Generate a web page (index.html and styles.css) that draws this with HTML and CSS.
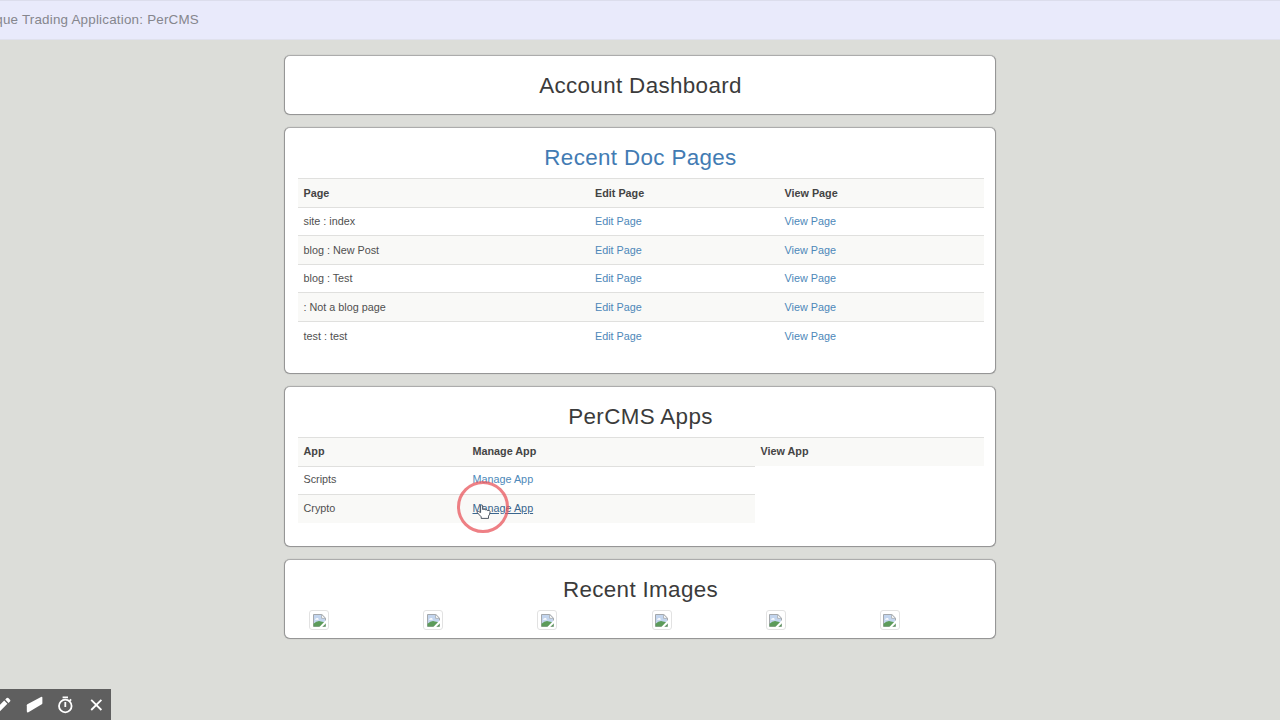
FILE: index.html
```html
<!DOCTYPE html>
<html lang="en">
<head>
    <meta charset="UTF-8">
    <meta name="viewport" content="width=device-width, initial-scale=1.0">
    <title>PerCMS</title>
    <link rel="stylesheet" href="styles.css">
</head>
<body>
    <svg class="sprite" width="0" height="0">
        <symbol id="broken" viewBox="0 0 13 13">
            <path d="M.5.5h8.3l3.7 3.7v8.3H.5z" fill="#c3d5ee" stroke="#a4a8ac"/>
            <path d="M8.6.5v3.8h3.9z" fill="#fff" stroke="#a4a8ac" stroke-width=".8"/>
            <path d="M2 5.7q.2-1.8 1.8-1.5 1.8-.6 2 1.5z" fill="#fff"/>
            <path d="M.5 12.5V9.8q4-3.7 7.5-2.3l4.5 1v4z" fill="#5c9b5a"/>
            <path d="M6.4 13L13 6v3.2L9.2 13z" fill="#fff"/>
        </symbol>
    </svg>

    <nav class="navbar">
        <span class="brand">Torque Trading Application: PerCMS</span>
    </nav>

    <main class="container">
        <section class="panel title">
            <h2>Account Dashboard</h2>
        </section>

        <section class="panel pages">
            <h2><a href="#">Recent Doc Pages</a></h2>
            <table class="table">
                <tr><th class="page">Page</th><th class="edit">Edit Page</th><th>View Page</th></tr>
                <tr><td>site : index</td><td><a href="#">Edit Page</a></td><td><a href="#">View Page</a></td></tr>
                <tr><td>blog : New Post</td><td><a href="#">Edit Page</a></td><td><a href="#">View Page</a></td></tr>
                <tr><td>blog : Test</td><td><a href="#">Edit Page</a></td><td><a href="#">View Page</a></td></tr>
                <tr><td>: Not a blog page</td><td><a href="#">Edit Page</a></td><td><a href="#">View Page</a></td></tr>
                <tr><td>test : test</td><td><a href="#">Edit Page</a></td><td><a href="#">View Page</a></td></tr>
            </table>
        </section>

        <section class="panel apps">
            <h2>PerCMS Apps</h2>
            <table class="table">
                <tr><th class="app">App</th><th class="manage">Manage App</th><th>View App</th></tr>
                <tr><td>Scripts</td><td><a href="#">Manage App</a></td></tr>
                <tr><td>Crypto</td><td><a class="hovered" href="#">Manage App</a></td></tr>
            </table>
        </section>

        <section class="panel images">
            <h2>Recent Images</h2>
            <div class="thumbs">
                <div class="col"><span class="thumbnail"><svg><use href="#broken"/></svg></span></div>
                <div class="col"><span class="thumbnail"><svg><use href="#broken"/></svg></span></div>
                <div class="col"><span class="thumbnail"><svg><use href="#broken"/></svg></span></div>
                <div class="col"><span class="thumbnail"><svg><use href="#broken"/></svg></span></div>
                <div class="col"><span class="thumbnail"><svg><use href="#broken"/></svg></span></div>
                <div class="col"><span class="thumbnail"><svg><use href="#broken"/></svg></span></div>
            </div>
        </section>
    </main>

    <!-- click highlight and pointer -->
    <div class="click-ring"></div>
    <svg class="pointer" viewBox="0 0 16 16">
        <path d="M4.6 8.6V2q0-1.1 1-1.1t1 1.1v3.4q1.9-.7 2.4.4 1.7-.5 2.2.6 2.9-.5 2.9 1.2 0 2.8-1.6 4.5v2.3H5.2v-1.6L1.3 8.7q-.2-1.4 1.2-1.2z" fill="#fff" stroke="#3d4654" stroke-width=".9" stroke-linejoin="round"/>
    </svg>

    <div class="toolbar">
        <svg class="pencil" viewBox="0 0 18 18" fill="#fff">
            <path d="M2 16v-3.2l8.2-8.2 3.2 3.2L5.2 16zM11.2 3.6l1.5-1.5q.8-.8 1.6 0L16 3.8q.8.8 0 1.6l-1.5 1.5z"/>
        </svg>
        <svg class="eraser" viewBox="0 0 18 18" fill="#fff">
            <path d="M2.4 8.2L16 1q1.4-.5 1.4.8v5.4q0 .7-.6 1.1L3.4 16.2q-1.6.7-1.6-.9V9.2q0-.6.6-1z"/>
        </svg>
        <svg class="timer" viewBox="0 0 18 18" fill="none" stroke="#fff">
            <circle cx="9.3" cy="10" r="6.3" stroke-width="1.8"/>
            <path d="M6.6 1.3H12M9.3 6v5M13.6 4.9l1.5-1.5" stroke-width="1.8"/>
        </svg>
        <svg class="close" viewBox="0 0 18 18" fill="none" stroke="#fff" stroke-width="1.8">
            <path d="M4.2 3.8l10.2 10.2M14.4 3.8L4.2 14"/>
        </svg>
    </div>
</body>
</html>
```
FILE: styles.css
```css
* {
    box-sizing: border-box;
}

body {
    margin: 0;
    height: 720px;
    overflow: hidden;
    background: #dcddd9;
    color: #505050;
    font-family: "Liberation Sans", Arial, sans-serif;
    font-size: 10.8px;
    line-height: 16px;
}

a {
    color: #4d88b9;
    text-decoration: none;
}

.sprite {
    display: block;
}

.navbar {
    display: flex;
    height: 40px;
    background: #e9eafb;
    border-top: 1px solid #dcddec;
    border-bottom: 1px solid #e0e1ed;
}

.brand {
    margin-left: -24px;
    font-size: 13.4px;
    letter-spacing: 0.21px;
    line-height: 38px;
    color: #85868d;
    white-space: nowrap;
}

.container {
    display: flex;
    flex-direction: column;
    gap: 12px;
    width: 712px;
    margin: 15px auto 0;
}

.panel {
    padding: 17px 12px 0 13px;
    background: #fff;
    border: 1px solid #969696;
    border-top-color: #acacac;
    border-radius: 6px;
    box-shadow: 0 0 1px #999;
}

.panel h2 {
    margin: 0;
    font-size: 22.4px;
    font-weight: normal;
    letter-spacing: 0.35px;
    line-height: 26px;
    text-align: center;
    color: #3b3b3b;
}

.panel h2 a {
    color: #427bb3;
}

.title {
    height: 60px;
}

.pages {
    height: 247px;
}

.apps {
    height: 161px;
}

.images {
    height: 80px;
}

.table {
    width: 686px;
    margin-top: 7px;
    border-collapse: collapse;
    table-layout: fixed;
}

.table th,
.table td {
    height: 28.5px;
    padding: 0 5.5px;
    border-top: 1px solid #e0e0de;
    text-align: left;
}

.table th {
    color: #444;
}

.table tr:nth-child(odd) th,
.table tr:nth-child(odd) td {
    background: #f9f9f7;
}

.apps .table th,
.apps .table td {
    padding-bottom: 2px;
}

.page {
    width: 291.5px;
}

.edit {
    width: 189.5px;
}

.app {
    width: 169px;
}

.manage {
    width: 288px;
}

.table .hovered {
    color: #3a668e;
    text-decoration: underline;
}

.thumbs {
    display: flex;
    margin-top: 7px;
}

.col {
    width: 114.2px;
    padding-left: 11px;
}

.thumbnail {
    display: flex;
    align-items: center;
    justify-content: center;
    width: 20px;
    height: 20px;
    border: 1px solid #e2e2e2;
    border-radius: 3px;
}

.thumbnail svg {
    width: 13px;
    height: 13px;
}

.click-ring {
    position: absolute;
    left: 457px;
    top: 481px;
    width: 52px;
    height: 52px;
    border: 3px solid rgba(232, 85, 92, 0.75);
    border-radius: 50%;
}

.pointer {
    position: absolute;
    left: 476px;
    top: 504px;
    width: 16px;
    height: 16px;
}

.toolbar {
    position: absolute;
    left: 0;
    bottom: 0;
    display: flex;
    align-items: center;
    gap: 13px;
    width: 111px;
    height: 31px;
    background: #5f5f5f;
    overflow: hidden;
}

.toolbar svg {
    flex: none;
    width: 18px;
    height: 18px;
}

.toolbar .pencil {
    margin-left: -6px;
}
```
